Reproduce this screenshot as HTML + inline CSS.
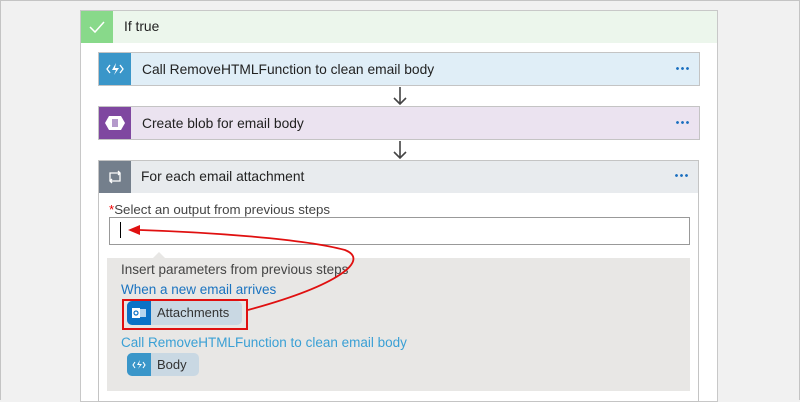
<!DOCTYPE html>
<html><head><style>
*{margin:0;padding:0;box-sizing:border-box}
body{width:800px;height:400px;background:#f1f1f1;font-family:"Segoe UI","Liberation Sans",sans-serif;position:relative;overflow:hidden}
.abs{position:absolute}
.t{font-size:13.8px;color:#222}
.dots{position:absolute;right:10px;top:14px;width:14px;height:3px;background:radial-gradient(circle,#1a6fc0 1.2px,transparent 1.6px) 0 0/5px 3px repeat-x}
</style></head><body>
<div class="abs" style="left:0;top:0;width:800px;height:400px;border:1px solid #c4c4c4;border-bottom:none"></div>
<div class="abs" style="left:80px;top:10px;width:638px;height:392px;background:#fff;border:1px solid #c8c8c8"></div>
<div class="abs" style="left:81px;top:11px;width:636px;height:32px;background:#ecf6ec"></div>
<div class="abs" style="left:81px;top:11px;width:32px;height:32px;background:#88d98a">
<svg width="32" height="32"><path d="M9 16l5 5 9-10" stroke="#fff" stroke-width="1.5" fill="none"/></svg></div>
<div class="abs t" style="left:124px;top:19px">If true</div>

<div class="abs" style="left:98px;top:52px;width:602px;height:34px;background:#e0eef7;border:1px solid #c4c4c4">
<div class="abs" style="left:0;top:0;width:32px;height:32px;background:#3a96c9"><svg width="32" height="32"><path d="M11 12l-3 4 3 4M21 12l3 4-3 4" stroke="#fff" stroke-width="1.3" fill="none"/><path d="M17 10l-4 7h4l-2 5 5-7h-4z" fill="#fff"/></svg></div>
<div class="abs t" style="left:43px;top:9px">Call RemoveHTMLFunction to clean email body</div><div class="dots"></div></div>
<svg class="abs" style="left:390px;top:86px" width="20" height="20"><path d="M10 1v17M4 12l6 6 6-6" stroke="#444" stroke-width="1.6" fill="none"/></svg>

<div class="abs" style="left:98px;top:106px;width:602px;height:34px;background:#ebe3f0;border:1px solid #c4c4c4">
<div class="abs" style="left:0;top:0;width:32px;height:32px;background:#7f47a0"><svg width="32" height="32"><path d="M10 9h12l4 7-4 7H10l-4-7z" fill="#fff"/><rect x="13" y="12" width="6" height="8" fill="#b59acb"/></svg></div>
<div class="abs t" style="left:43px;top:9px">Create blob for email body</div><div class="dots"></div></div>
<svg class="abs" style="left:390px;top:140px" width="20" height="20"><path d="M10 1v17M4 12l6 6 6-6" stroke="#444" stroke-width="1.6" fill="none"/></svg>

<div class="abs" style="left:98px;top:160px;width:601px;height:242px;background:#fff;border:1px solid #c4c4c4">
<div class="abs" style="left:0;top:0;width:599px;height:32px;background:#e8ebee"></div>
<div class="abs" style="left:0;top:0;width:32px;height:32px;background:#747f8c"><svg width="32" height="32"><path d="M11 20v-8h10M19 10l2 2-2 2M21 12v8H11M13 22l-2-2 2-2" stroke="#fff" stroke-width="1.3" fill="none"/></svg></div>
<div class="abs t" style="left:42px;top:8px">For each email attachment</div><div class="dots" style="top:13px"></div></div>

<div class="abs" style="left:109px;top:202px;font-size:13.3px;color:#444"><span style="color:#e00">*</span>Select an output from previous steps</div>
<div class="abs" style="left:109px;top:217px;width:581px;height:28px;border:1px solid #999;background:#fff"></div>
<div class="abs" style="left:120px;top:222px;width:1px;height:16px;background:#000"></div>
<div class="abs" style="left:107px;top:258px;width:583px;height:133px;background:#e8e7e5"></div>
<div class="abs" style="left:152px;top:252px;width:0;height:0;border-left:7px solid transparent;border-right:7px solid transparent;border-bottom:7px solid #e8e7e5"></div>
<div class="abs" style="left:121px;top:262px;font-size:13.5px;color:#444">Insert parameters from previous steps</div>
<div class="abs" style="left:121px;top:282px;font-size:13.5px;color:#1a73c0">When a new email arrives</div>
<div class="abs" style="left:127px;top:301px;width:115px;height:24px;background:#c9d8e3;border-radius:5px;overflow:hidden">
<div style="position:absolute;left:0;top:0;width:24px;height:24px;background:#0b72c6"><svg width="24" height="24"><rect x="5" y="7" width="8" height="10" fill="#fff"/><rect x="13" y="8" width="6" height="8" fill="#fff" opacity=".7"/><circle cx="9" cy="12" r="2" fill="none" stroke="#0b72c6" stroke-width="1.2"/></svg></div>
<div style="position:absolute;left:30px;top:4px;font-size:13px;color:#333">Attachments</div></div>
<div class="abs" style="left:122px;top:299px;width:126px;height:31px;border:2px solid #e01010"></div>
<div class="abs" style="left:121px;top:335px;font-size:13.5px;color:#3aa0d5">Call RemoveHTMLFunction to clean email body</div>
<div class="abs" style="left:127px;top:353px;width:72px;height:23px;background:#c9d8e3;border-radius:5px;overflow:hidden">
<div style="position:absolute;left:0;top:0;width:24px;height:23px;background:#3a96c9"><svg width="24" height="23"><path d="M8 9l-2 3 2 3M16 9l2 3-2 3" stroke="#fff" stroke-width="1.1" fill="none"/><path d="M13 7l-3 5h3l-2 4 4-5h-3z" fill="#fff"/></svg></div>
<div style="position:absolute;left:30px;top:4px;font-size:13px;color:#333">Body</div></div>
<svg class="abs" style="left:0;top:0" width="800" height="400"><path d="M248 310 C340 285 370 260 345 250 C300 238 200 232 140 230" stroke="#e01010" stroke-width="1.8" fill="none"/><path d="M128 230l12-5v10z" fill="#e01010"/></svg>
</body></html>
